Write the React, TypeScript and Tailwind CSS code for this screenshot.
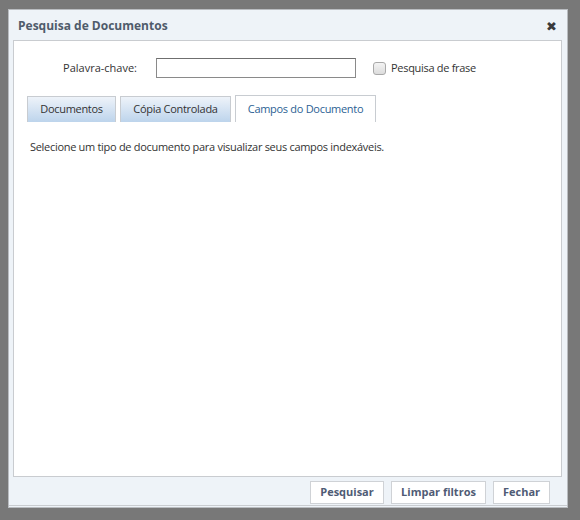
import React from "react";

export default function App() {
  return (
    <div
      className="w-[580px] h-[520px] bg-[#787878] pt-[9px] pl-[8px]"
      style={{ fontFamily: '"Open Sans", "Noto Sans", sans-serif' }}
    >
      <div className="w-[560px] h-[499px] bg-[#eef3f8] border border-[#b9bcc0] flex flex-col">
        <div className="h-[30px] flex items-center justify-between pl-[9px] pr-[10px] pt-[2px] shrink-0">
          <span className="text-[12px] font-bold text-[#4f5b6b]">Pesquisa de Documentos</span>
          <span className="text-[13px] leading-none text-[#3a3a3a]">✖</span>
        </div>
        <div className="ml-[4px] mr-[5px] flex-1 bg-white border border-[#c9ccd0] flex flex-col text-[11px] tracking-[-0.3px]">
          <div className="flex items-center pt-[17px]">
            <span className="w-[123px] text-right text-[#333] tracking-normal">Palavra-chave:</span>
            <input className="ml-[19px] w-[200px] h-[20px] border border-[#8a8a8a] border-t-[#6f6f6f] bg-white outline-none" />
            <span className="ml-[17px] w-[13px] h-[13px] rounded-[3px] border border-[#a9a9a9] bg-gradient-to-b from-[#f4f4f4] to-[#dcdcdc]" />
            <span className="ml-[5px] text-[#333]">Pesquisa de frase</span>
          </div>
          <div className="flex items-end gap-[4px] pl-[13px] mt-[17px]">
            <div className="w-[89px] h-[26px] border border-[#c8ccd1] border-b-0 bg-gradient-to-b from-[#eef3f9] to-[#bdd4ec] flex items-center justify-center text-[#333]">
              Documentos
            </div>
            <div className="w-[111px] h-[26px] border border-[#c8ccd1] border-b-0 bg-gradient-to-b from-[#eef3f9] to-[#bdd4ec] flex items-center justify-center text-[#333]">
              Cópia Controlada
            </div>
            <div className="w-[141px] h-[27px] border border-[#c8ccd1] border-b-0 bg-white flex items-center justify-center text-[#2c5f94]">
              Campos do Documento
            </div>
          </div>
          <div className="pl-[16px] pt-[17px] text-[#333]">
            Selecione um tipo de documento para visualizar seus campos indexáveis.
          </div>
        </div>
        <div className="h-[29px] shrink-0 flex items-start pt-[4px] justify-end gap-[7px] pr-[17px] border-b border-[#c9ccd0] mb-[1px]">
          <button className="h-[23px] w-[74px] bg-white border border-[#cfd2d6] text-[11px] font-bold text-[#4f5b75]">Pesquisar</button>
          <button className="h-[23px] w-[95px] bg-white border border-[#cfd2d6] text-[11px] font-bold text-[#4f5b75]">Limpar filtros</button>
          <button className="h-[23px] w-[57px] bg-white border border-[#cfd2d6] text-[11px] font-bold text-[#4f5b75]">Fechar</button>
        </div>
      </div>
    </div>
  );
}
